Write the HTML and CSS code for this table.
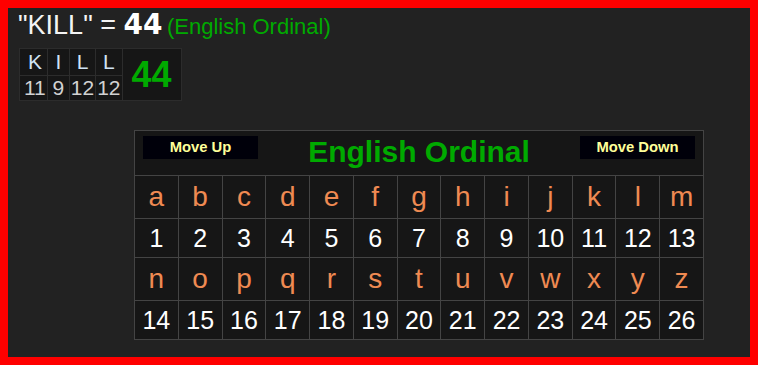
FILE: index.html
```html
<!DOCTYPE html>
<html lang="en">
<head>
<meta charset="utf-8">
<title>KILL = 44 (English Ordinal)</title>
<link rel="stylesheet" href="styles.css">
</head>
<body>
<div class="frame">
  <div class="headline">
    <span class="phrase">"KILL" = </span><span class="total">44</span> <span class="cipher">(English Ordinal)</span>
  </div>

  <table class="breakdown">
    <tr>
      <td class="bd-letter bd-first">K</td>
      <td class="bd-letter">I</td>
      <td class="bd-letter">L</td>
      <td class="bd-letter">L</td>
      <td class="bd-sum" rowspan="2">44</td>
    </tr>
    <tr>
      <td class="bd-num bd-first">11</td>
      <td class="bd-num">9</td>
      <td class="bd-num">12</td>
      <td class="bd-num">12</td>
    </tr>
  </table>

  <div class="board">
    <div class="board-head">
      <button class="move-btn">Move Up</button>
      <div class="board-title">English Ordinal</div>
      <button class="move-btn">Move Down</button>
    </div>

    <div class="cell letter">a</div><div class="cell letter">b</div><div class="cell letter">c</div><div class="cell letter">d</div><div class="cell letter">e</div><div class="cell letter">f</div><div class="cell letter">g</div><div class="cell letter">h</div><div class="cell letter">i</div><div class="cell letter">j</div><div class="cell letter">k</div><div class="cell letter">l</div><div class="cell letter">m</div>
    <div class="cell num">1</div><div class="cell num">2</div><div class="cell num">3</div><div class="cell num">4</div><div class="cell num">5</div><div class="cell num">6</div><div class="cell num">7</div><div class="cell num">8</div><div class="cell num">9</div><div class="cell num">10</div><div class="cell num">11</div><div class="cell num">12</div><div class="cell num">13</div>
    <div class="cell letter">n</div><div class="cell letter">o</div><div class="cell letter">p</div><div class="cell letter">q</div><div class="cell letter">r</div><div class="cell letter">s</div><div class="cell letter">t</div><div class="cell letter">u</div><div class="cell letter">v</div><div class="cell letter">w</div><div class="cell letter">x</div><div class="cell letter">y</div><div class="cell letter">z</div>
    <div class="cell num">14</div><div class="cell num">15</div><div class="cell num">16</div><div class="cell num">17</div><div class="cell num">18</div><div class="cell num">19</div><div class="cell num">20</div><div class="cell num">21</div><div class="cell num">22</div><div class="cell num">23</div><div class="cell num">24</div><div class="cell num">25</div><div class="cell num">26</div>
  </div>
</div>
</body>
</html>
```

FILE: styles.css
```css
html, body {
  margin: 0;
  padding: 0;
}

body {
  font-family: "Liberation Sans", Arial, sans-serif;
  background: #ff0000;
}

.frame {
  box-sizing: border-box;
  width: 758px;
  height: 365px;
  border: 8px solid #ff0000;
  background: #222222;
  padding: 2px 0 0 10px;
  overflow: hidden;
}

.headline {
  line-height: 30px;
  white-space: nowrap;
}

.phrase {
  font-size: 27px;
  color: #f4f4f4;
}

.total {
  font-family: "DejaVu Sans", sans-serif;
  font-weight: bold;
  font-size: 28px;
  color: #ffffff;
}

.cipher {
  font-size: 22px;
  color: #00aa00;
}

.breakdown {
  border-collapse: collapse;
  margin: 4px 0 0 1px;
  background: #161616;
}

.breakdown td {
  border: 1px solid #2c2c2c;
  padding: 0 1px;
  width: 19px;
  text-align: center;
  font-size: 21px;
}

.breakdown td.bd-first {
  padding-left: 4px;
}

.bd-letter {
  color: #cfe3f5;
  height: 26px;
  line-height: 26px;
}

.bd-num {
  color: #d2d2d2;
  height: 24px;
  line-height: 22px;
}

.breakdown td.bd-sum {
  width: 56px;
  font-weight: bold;
  font-size: 36px;
  color: #00aa00;
  line-height: 40px;
}

.board {
  box-sizing: border-box;
  width: 570px;
  margin: 29px 0 0 116px;
  display: grid;
  grid-template-columns: repeat(13, 1fr);
  border-top: 1px solid #444444;
  border-left: 1px solid #444444;
  background: #161616;
}

.board-head {
  grid-column: 1 / -1;
  border-right: 1px solid #444444;
  border-bottom: 1px solid #444444;
  padding: 5px 8px 0 8px;
  box-sizing: border-box;
  height: 45px;
  display: flex;
  justify-content: space-between;
  align-items: flex-start;
}

.move-btn {
  width: 115px;
  height: 23px;
  border: none;
  padding: 0;
  margin: 0;
  background: #00000a;
  color: #ffff99;
  font-family: "Liberation Sans", Arial, sans-serif;
  font-weight: bold;
  font-size: 14.8px;
  line-height: 23px;
}

.board-title {
  font-size: 30px;
  font-weight: bold;
  color: #00aa00;
  line-height: 34px;
  margin-top: -1px;
}

.cell {
  border-right: 1px solid #444444;
  border-bottom: 1px solid #444444;
  text-align: center;
}

.letter {
  height: 42px;
  line-height: 42px;
  font-size: 28px;
  color: #ef8a52;
}

.num {
  height: 38px;
  line-height: 38px;
  font-size: 25px;
  color: #ffffff;
}
```
